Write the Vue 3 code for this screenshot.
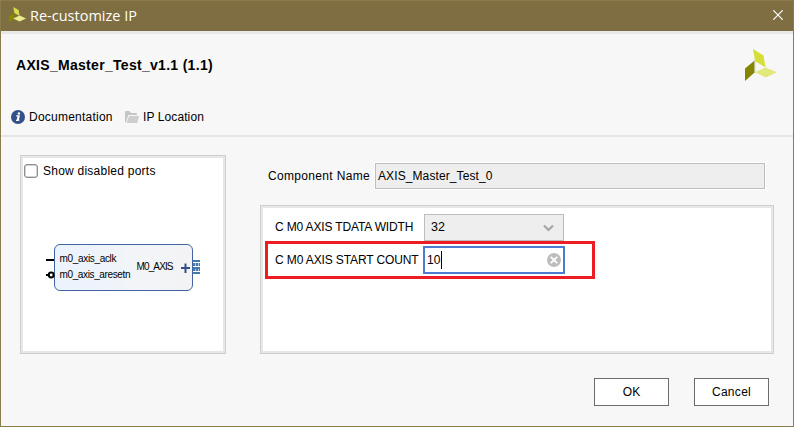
<script setup>
import { ref } from 'vue'

const componentName = 'AXIS_Master_Test_0'
const width = '32'
const count = ref('10')
</script>

<template>
  <div class="dialog">
    <header class="titlebar">
      <svg class="app-logo" width="17" height="16" viewBox="0 0 32 32" preserveAspectRatio="none">
        <path d="M8 0 18 6 20 18 10 12Z" fill="#d9dc4a" />
        <path d="M0 18 10 11V23L0 31Z" fill="#858700" />
        <path d="M8 23 20 17 32 23 20 29Z" fill="#e9ec8e" />
      </svg>
      <span class="title">Re-customize IP</span>
      <svg class="close" width="10" height="10" viewBox="0 0 10 10">
        <path d="M.3.3 9.7 9.7M9.7.3.3 9.7" stroke="#fff" stroke-width="1.2" />
      </svg>
    </header>

    <section class="head">
      <div class="head-top">
        <h1>AXIS_Master_Test_v1.1 (1.1)</h1>
        <svg class="brand" width="32" height="32" viewBox="0 0 32 32">
          <path d="M8 0 18.5 6.5 20.5 18.5 10 12Z" fill="#d6de37" />
          <path d="M0 19.5 9.6 11.5V23.5L0 32Z" fill="#858500" />
          <path d="M9.6 23.3 20.5 18.5 32 23.3 21 28.5Z" fill="#e2e97c" />
          <path d="M10 12V23" stroke="#d4d4c4" stroke-width=".8" />
        </svg>
      </div>
      <nav class="links">
        <svg width="14" height="14" viewBox="0 0 14 14">
          <circle cx="7" cy="7" r="7" fill="#34508a" />
          <circle cx="7.9" cy="3.5" r="1.2" fill="#fff" />
          <path d="M5.2 5.9H8.2L7.2 10.1H8.4M5 10.3H7.4M7.3 6 6.2 10.4" fill="none" stroke="#fff" stroke-width="1.2" />
        </svg>
        <span class="doc">Documentation</span>
        <svg class="folder" width="14" height="12" viewBox="0 0 14 12">
          <path d="M0 11V1Q0 0 1 0H4.5L6 2H11Q12 2 12 3V4H3.3L1 11.4Z" fill="#c6c6c6" />
          <path d="M4 5H14L12.3 12H1.7Z" fill="#cecece" />
        </svg>
        <span class="loc">IP Location</span>
      </nav>
    </section>

    <main class="body">
      <aside class="panel preview">
        <label class="check"><i class="box"></i><span>Show disabled ports</span></label>
        <svg class="diagram" width="200" height="60" viewBox="23 238 200 60">
          <defs>
            <linearGradient id="blockFill" x1="0" y1="0" x2="1" y2="0">
              <stop offset="0" stop-color="#ebf3fe" />
              <stop offset=".65" stop-color="#f2f4f7" />
              <stop offset="1" stop-color="#f3f3f5" />
            </linearGradient>
          </defs>
          <rect x="54.5" y="244.5" width="138" height="46" rx="5.5" fill="url(#blockFill)" stroke="#4364a2" />
          <path d="M46 260H54M46 275H49" stroke="#000" stroke-width="2" />
          <circle cx="51.2" cy="275" r="2.4" fill="#fff" stroke="#000" stroke-width="2" />
          <text x="59.5" y="262" textLength="57">m0_axis_aclk</text>
          <text x="59.5" y="278" textLength="71">m0_axis_aresetn</text>
          <text x="136.5" y="270" textLength="37">M0_AXIS</text>
          <path d="M181 268H190M185.500 263.500V273" stroke="#34508a" stroke-width="2" />
          <rect x="193" y="260" width="7" height="14" fill="#437aad" />
          <path d="M193 262.500H200M193 266.500H200M193 271.500H200" stroke="#fff" stroke-width="1" />
          <path d="M195.500 262V266M198.500 262V266M195.500 269V272M198.500 269V272" stroke="#fff" stroke-width=".6" />
        </svg>
      </aside>

      <section class="config">
        <div class="name-row">
          <span class="name-label">Component Name</span>
          <div class="name-field">{{ componentName }}</div>
        </div>
        <div class="panel params">
          <div class="param">
            <span class="tdata">C M0 AXIS TDATA WIDTH</span>
            <div class="combo">
              <span>{{ width }}</span>
              <svg width="11" height="8" viewBox="0 0 11 8">
                <path d="M1 1.500 5.500 6 10 1.500" fill="none" stroke="#a6a6a6" stroke-width="2.2" />
              </svg>
            </div>
          </div>
          <div class="param marked">
            <span class="start">C M0 AXIS START COUNT</span>
            <div class="entry">
              <span class="value">{{ count }}</span><i class="caret"></i>
              <svg width="14" height="14" viewBox="0 0 14 14">
                <circle cx="7" cy="7" r="7" fill="#bdbdbd" />
                <path d="M3.800 3.800 10.200 10.200M10.200 3.800 3.800 10.200" stroke="#fff" stroke-width="1.8" />
              </svg>
            </div>
          </div>
        </div>
      </section>
    </main>

    <footer class="actions">
      <button>OK</button>
      <button class="cancel">Cancel</button>
    </footer>
  </div>
</template>

<style>
body { margin: 0; }
</style>

<style scoped>
.dialog {
  box-sizing: border-box;
  width: 794px;
  height: 427px;
  border: 1px solid #8a7d4b;
  border-top: 0;
  background: #f7f7f7;
  color: #000;
  font: 12px/16px "Liberation Sans", Arial, sans-serif;
  display: flex;
  flex-direction: column;
  white-space: nowrap;
  overflow: hidden;
}
.titlebar {
  box-sizing: border-box;
  height: 31px;
  border-top: 1px solid #8a7d4b;
  background: #7e6e41;
  display: flex;
  align-items: center;
  padding: 0 10px 0 8px;
}
.app-logo { margin-bottom: 2px; }
.title {
  margin-left: 4px;
  color: #fff;
  font: 14.5px/20px "Open Sans", "Noto Sans", sans-serif;
}
.close { margin-left: auto; margin-bottom: 2px; }
.head {
  box-sizing: border-box;
  height: 106px;
  border-top: 3px solid #e8e8e8;
  border-bottom: 2px solid #e6e6e6;
  padding: 15px 16px 0 15px;
}
.head-top { height: 56px; display: flex; justify-content: space-between; }
h1 { margin: 8px 0 0; font-size: 14px; line-height: 16px; font-weight: bold; letter-spacing: 0.3px; }
.links { display: flex; align-items: center; height: 24px; margin-left: -5px; }
.doc { margin-left: 4px; width: 84px; letter-spacing: 0.23px; }
.folder { margin-left: 12px; }
.loc { margin-left: 4px; letter-spacing: 0.1px; }
.body { display: flex; gap: 34px; height: 217px; padding: 18px 19px 0; box-sizing: border-box; }
.panel {
  box-sizing: border-box;
  border: 1px solid #cfcfcf;
  box-shadow: inset 0 0 0 2px #e7e7e7;
  background: #fff;
}
.preview { width: 206px; height: 199px; padding: 7px 2px 0; }
.check { display: flex; align-items: center; height: 16px; padding-left: 1px; letter-spacing: 0.24px; }
.box { box-sizing: border-box; width: 14px; height: 14px; border: 1px solid #8e8e8e; box-shadow: inset 0 0 0 0.500px #aaa; border-radius: 3px; margin-right: 5px; }
.diagram { display: block; margin-top: 59px; }
.diagram text { font-size: 10px; }
.config { width: 514px; }
.name-row { display: flex; align-items: center; height: 26px; margin: 8px 0 16px; padding-left: 8px; }
.name-label { width: 107px; letter-spacing: 0.33px; }
.name-field {
  box-sizing: border-box;
  width: 390px;
  height: 26px;
  border: 1px solid #bdbdbd;
  outline: 1px solid #fff;
  background: #eee;
  padding-left: 2px;
  line-height: 24px;
  letter-spacing: 0.1px;
}
.params { height: 149px; padding: 8px 4px 0; }
.param { display: flex; align-items: center; padding-left: 10px; height: 27px; }
.param > span { width: 149px; letter-spacing: -0.15px; }
.combo {
  box-sizing: border-box;
  width: 140px;
  height: 27px;
  border: 1px solid #bdbdbd;
  background: #eee;
  display: flex;
  align-items: center;
  justify-content: space-between;
  padding: 0 9px 0 6px;
}
.combo span { font-size: 12.5px; position: relative; top: -1px; }
.param > .tdata { position: relative; top: -1px; }
.marked { box-sizing: border-box; width: 330px; height: 38px; border: 3px solid #ed1c24; padding-left: 7px; }
.marked > .start { width: 148px; letter-spacing: -0.12px; }
.entry {
  box-sizing: border-box;
  width: 142px;
  height: 28px;
  border: 2px solid #4d7bcf;
  background: #fff;
  display: flex;
  align-items: center;
  padding: 0 2px;
}
.caret { width: 1px; height: 18px; margin-left: 1px; background: #000; }
.entry svg { margin-left: auto; }
.combo svg { margin-top: 1px; }
.actions { display: flex; justify-content: flex-end; gap: 25px; padding: 24px 24px 0 0; }
button {
  box-sizing: border-box;
  width: 75px;
  height: 28px;
  padding: 0;
  border: 1px solid #6b6b6b;
  border-radius: 0;
  background: #fff;
  color: #000;
  font: 12px/16px "Liberation Sans", Arial, sans-serif;
}
.cancel { letter-spacing: 0.3px; }
</style>
